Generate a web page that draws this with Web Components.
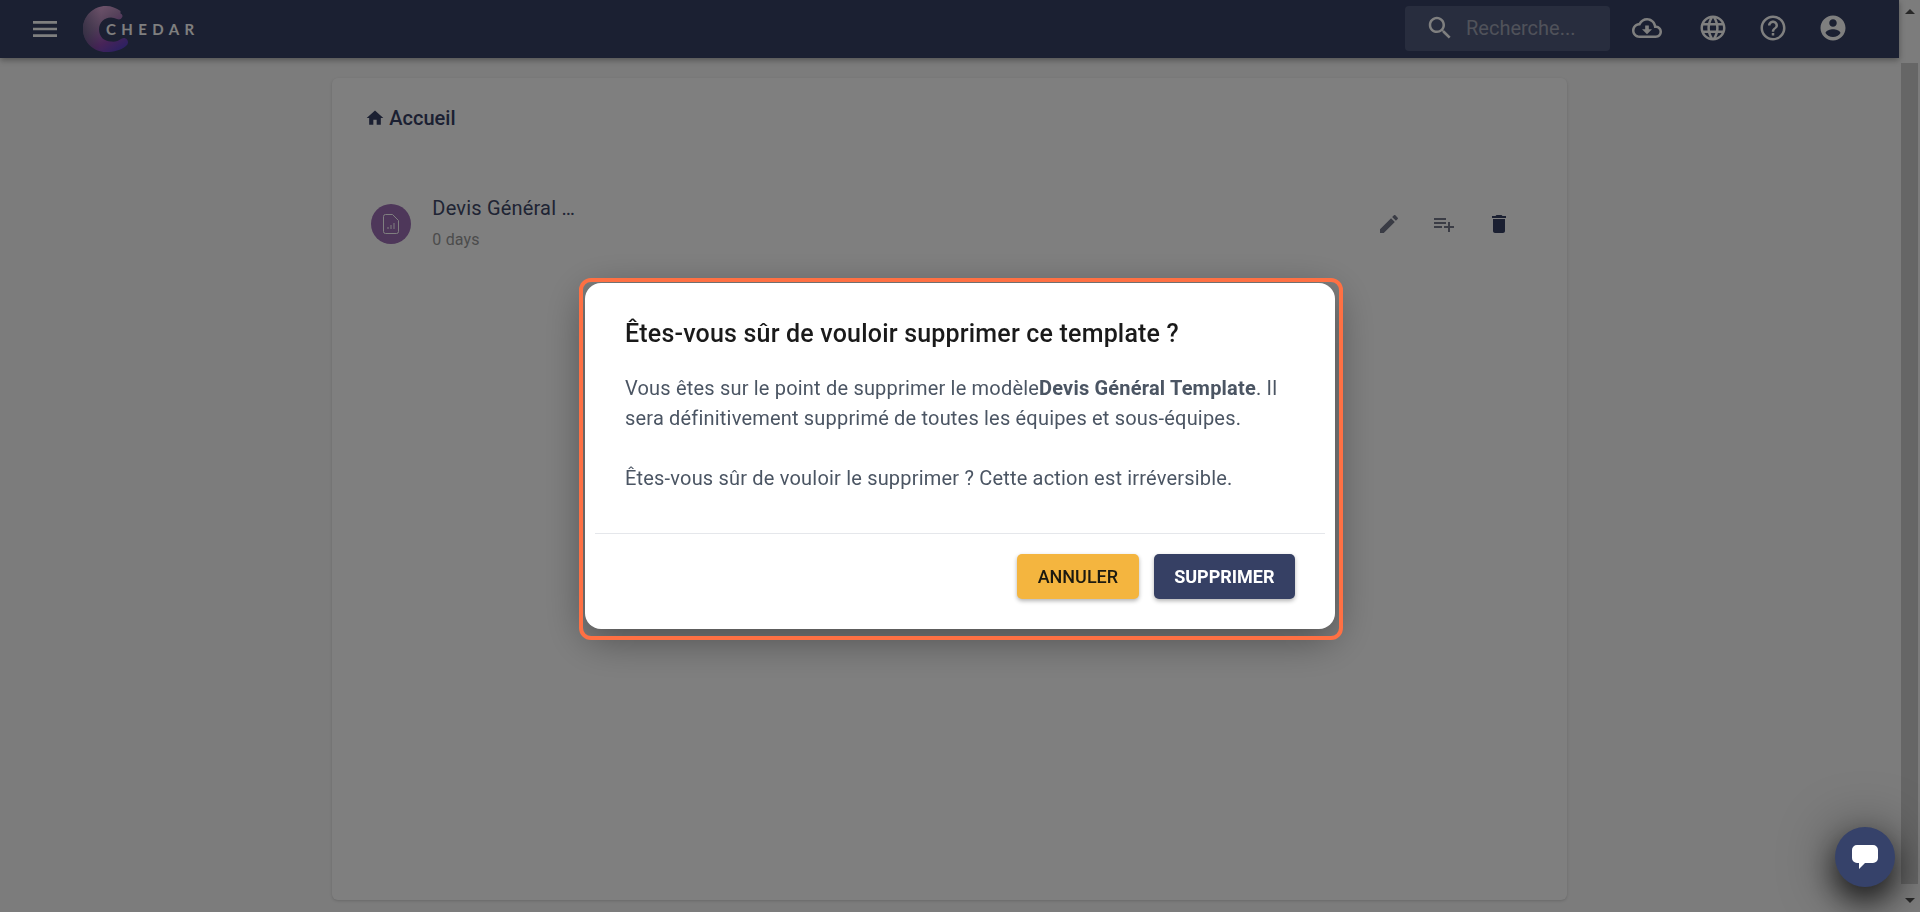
<!DOCTYPE html>
<html lang="fr">
<head>
<meta charset="utf-8">
<title>Chedar</title>
<style>
  html, body { margin: 0; height: 100%; overflow: hidden; }
  body { font-family: Roboto, "Liberation Sans", sans-serif; background: #f8f8f8; }
  #app { display: flex; height: 912px; }
  #main { flex: 1; min-width: 0; display: flex; flex-direction: column; }
</style>
</head>
<body>
<div id="app">
  <div id="main">
    <top-bar></top-bar>
    <home-card>
      <template-row titre="Devis Général …" sub="0 days"></template-row>
    </home-card>
  </div>
  <scroll-bar></scroll-bar>
</div>

<confirm-dialog titre="Êtes-vous sûr de vouloir supprimer ce template ?" cancel="Annuler" ok="Supprimer">
  Vous êtes sur le point de supprimer le modèle<b>Devis Général Template</b>. Il sera définitivement supprimé de toutes les équipes et sous-équipes.<br><br>Êtes-vous sûr de vouloir le supprimer ? Cette action est irréversible.
</confirm-dialog>

<chat-button></chat-button>

<script>
const ICONS = {
  menu: 'M3 18h18v-2H3v2zm0-5h18v-2H3v2zm0-7v2h18V6H3z',
  search: 'M15.5 14h-.79l-.28-.27C15.41 12.59 16 11.11 16 9.5 16 5.91 13.09 3 9.5 3S3 5.91 3 9.5 5.91 16 9.5 16c1.61 0 3.09-.59 4.23-1.57l.27.28v.79l5 4.99L20.49 19l-4.99-5zm-6 0C7.01 14 5 11.99 5 9.5S7.01 5 9.5 5 14 7.01 14 9.5 11.99 14 9.5 14z',
  cloud: 'M19.35 10.04C18.67 6.59 15.64 4 12 4 9.11 4 6.6 5.64 5.35 8.04 2.34 8.36 0 10.91 0 14c0 3.31 2.69 6 6 6h13c2.76 0 5-2.24 5-5 0-2.64-2.05-4.78-4.65-4.96zM19 18H6c-2.21 0-4-1.79-4-4 0-2.05 1.53-3.76 3.56-3.97l1.07-.11.5-.95C8.08 7.14 9.94 6 12 6c2.62 0 4.88 1.86 5.39 4.43l.3 1.5 1.53.11c1.56.1 2.78 1.41 2.78 2.96 0 1.65-1.35 3-3 3zm-5.55-8h-2.9v3H8l4 4 4-4h-2.55z',
  language: 'M11.99 2C6.47 2 2 6.48 2 12s4.47 10 9.99 10C17.52 22 22 17.52 22 12S17.52 2 11.99 2zm6.93 6h-2.95c-.32-1.25-.78-2.45-1.38-3.56 1.84.63 3.37 1.91 4.33 3.56zM12 4.04c.83 1.2 1.48 2.53 1.91 3.96h-3.82c.43-1.43 1.08-2.76 1.91-3.96zM4.26 14C4.1 13.36 4 12.69 4 12s.1-1.36.26-2h3.38c-.08.66-.14 1.32-.14 2 0 .68.06 1.34.14 2H4.26zm.82 2h2.95c.32 1.25.78 2.45 1.38 3.56-1.84-.63-3.37-1.9-4.33-3.56zm2.95-8H5.08c.96-1.66 2.49-2.93 4.33-3.56C8.81 5.55 8.35 6.75 8.03 8zM12 19.96c-.83-1.2-1.48-2.53-1.91-3.96h3.82c-.43 1.43-1.08 2.76-1.91 3.96zM14.34 14H9.66c-.09-.66-.16-1.32-.16-2 0-.68.07-1.35.16-2h4.68c.09.65.16 1.32.16 2 0 .68-.07 1.34-.16 2zm.25 5.56c.6-1.11 1.06-2.31 1.38-3.56h2.95c-.96 1.65-2.49 2.93-4.33 3.56zM16.36 14c.08-.66.14-1.32.14-2 0-.68-.06-1.34-.14-2h3.38c.16.64.26 1.31.26 2s-.1 1.36-.26 2h-3.38z',
  help: 'M11 18h2v-2h-2v2zm1-16C6.48 2 2 6.48 2 12s4.48 10 10 10 10-4.48 10-10S17.52 2 12 2zm0 18c-4.41 0-8-3.59-8-8s3.59-8 8-8 8 3.59 8 8-3.59 8-8 8zm0-14c-2.21 0-4 1.79-4 4h2c0-1.1.9-2 2-2s2 .9 2 2c0 2-3 1.75-3 5h2c0-2.25 3-2.5 3-5 0-2.21-1.79-4-4-4z',
  account: 'M12 2C6.48 2 2 6.48 2 12s4.48 10 10 10 10-4.48 10-10S17.52 2 12 2zm0 3c1.66 0 3 1.34 3 3s-1.34 3-3 3-3-1.34-3-3 1.34-3 3-3zm0 14.2c-2.5 0-4.71-1.28-6-3.22.03-1.99 4-3.08 6-3.08 1.99 0 5.97 1.09 6 3.08-1.29 1.94-3.5 3.22-6 3.22z',
  home: 'M10 20v-6h4v6h5v-8h3L12 3 2 12h3v8z',
  edit: 'M3 17.25V21h3.75L17.81 9.94l-3.75-3.75L3 17.25zM20.71 7.04c.39-.39.39-1.02 0-1.41l-2.34-2.34c-.39-.39-1.02-.39-1.41 0l-1.83 1.83 3.75 3.75 1.83-1.83z',
  playlist: 'M14 10H2v2h12v-2zm0-4H2v2h12V6zm4 8v-4h-2v4h-4v2h4v4h2v-4h4v-2h-4zM2 16h8v-2H2v2z',
  trash: 'M6 19c0 1.1.9 2 2 2h8c1.1 0 2-.9 2-2V7H6v12zM19 4h-3.5l-1-1h-5l-1 1H5v2h14V4z'
};

class MatIcon extends HTMLElement {
  constructor() {
    super()
    const size = this.getAttribute('size') || 24;
    const color = this.getAttribute('color') || 'currentColor';
    this.attachShadow({ mode: 'open' }).innerHTML = `
      <style>
        :host { display: inline-flex; flex: none; width: ${size}px; height: ${size}px; }
        svg { width: 100%; height: 100%; fill: ${color}; display: block; }
      </style>
      <svg viewBox="0 0 24 24"><path d="${ICONS[this.getAttribute('name')]}"/></svg>
    `;
  }
}

class TopBar extends HTMLElement {
  constructor() {
    super()
    this.attachShadow({ mode: 'open' }).innerHTML = `
      <style>
        :host { display: flex; align-items: center; height: 58px; flex: none; background: #364064; color: #fff;
                box-shadow: 0 2px 6px rgba(0,0,0,.35); position: relative; z-index: 1; padding-left: 29px; }
        .logo { display: flex; align-items: center; margin-left: 22px; height: 46px; width: 112px; }
        .logo svg { width: 46px; height: 46px; display: block; flex: none; }
        .logo span { font: 700 15px Lato, Roboto, sans-serif; letter-spacing: 5.4px; margin-left: -23px; color: #fff; }
        .search { margin-left: auto; display: flex; align-items: center; width: 205px; height: 45px; box-sizing: border-box;
                  border-radius: 4px; background: #505a7c; padding-left: 20px; position: relative; top: -1px; }
        .search span { font-size: 20px; color: #a0a4b4; margin-left: 11px; }
        .tools { display: flex; align-items: center; margin-left: 22px; margin-right: 51px; position: relative; top: -1px; }
        .tools mat-icon:nth-child(2) { margin-left: 36px; }
        .tools mat-icon:nth-child(3) { margin-left: 30px; }
        .tools mat-icon:nth-child(4) { margin-left: 30px; }
      </style>
      <mat-icon name="menu" size="32"></mat-icon>
      <div class="logo">
        <svg viewBox="0 0 46 46">
          <defs>
            <linearGradient id="a" x1="0.95" y1="0.95" x2="0.35" y2="0">
              <stop offset="0" stop-color="#5040c8"/>
              <stop offset=".35" stop-color="#9048b0"/>
              <stop offset=".7" stop-color="#b088b8"/>
              <stop offset="1" stop-color="#e0a8d8"/>
            </linearGradient>
            <linearGradient id="b" x1="0" y1="0" x2="1" y2="0">
              <stop offset="0" stop-color="#364064" stop-opacity=".55"/>
              <stop offset=".4" stop-color="#364064" stop-opacity="0"/>
            </linearGradient>
          </defs>
          <path fill="url(#a)" d="M37.500 5C33.500 2 28.500 0 23 0 10.300 0 0 10.300 0 23s10.300 23 23 23c8 0 15-2 20-6 2.500-2 2.500-4.500 1-6.500-1.500-2-4-2-6-.500-2.500 2-6 3-10 2.500-7 0-12-5-12-12s5-12 12-12c2 0 4 .5 6 1.500 2 1 4 .5 5-1.500 1-1.500.5-3-1.500-4z"/>
          <path fill="url(#b)" d="M37.500 5C33.500 2 28.500 0 23 0 10.300 0 0 10.300 0 23s10.300 23 23 23c8 0 15-2 20-6 2.500-2 2.500-4.500 1-6.500-1.500-2-4-2-6-.500-2.500 2-6 3-10 2.500-7 0-12-5-12-12s5-12 12-12c2 0 4 .5 6 1.500 2 1 4 .5 5-1.500 1-1.500.5-3-1.500-4z"/>
        </svg>
        <span>CHEDAR</span>
      </div>
      <div class="search">
        <mat-icon name="search" size="30"></mat-icon>
        <span>Recherche...</span>
      </div>
      <div class="tools">
        <mat-icon name="cloud" size="30"></mat-icon>
        <mat-icon name="language" size="30"></mat-icon>
        <mat-icon name="help" size="30"></mat-icon>
        <mat-icon name="account" size="30"></mat-icon>
      </div>
    `;
  }
}

class HomeCard extends HTMLElement {
  constructor() {
    super()
    this.attachShadow({ mode: 'open' }).innerHTML = `
      <style>
        :host { display: block; box-sizing: border-box; width: 65%; height: 822px; margin: 20px auto 0; background: #fff;
                border-radius: 6px; box-shadow: 0 1px 3px rgba(0,0,0,.16); padding: 28px 39px 0; flex: none; }
        .crumb { display: flex; align-items: center; gap: 4px; margin-left: -6px; font-size: 20px; font-weight: 500;
                 line-height: 24px; color: #364064; }
        .list { margin-top: 66px; }
      </style>
      <div class="crumb"><mat-icon name="home" size="20"></mat-icon>Accueil</div>
      <div class="list"><slot></slot></div>
    `;
  }
}

class TemplateRow extends HTMLElement {
  constructor() {
    super()
    this.attachShadow({ mode: 'open' }).innerHTML = `
      <style>
        :host { display: flex; align-items: center; }
        .avatar { width: 40px; height: 40px; border-radius: 50%; background: #9c6eb4; flex: none;
                  display: flex; align-items: center; justify-content: center; }
        .avatar svg { width: 16px; height: 20px; display: block; }
        .txt { margin-left: 21px; }
        .t { font-size: 20px; letter-spacing: .19px; line-height: 24px; color: #404868; white-space: nowrap; }
        .s { font-size: 16px; letter-spacing: .17px; line-height: 24px; margin-top: 8px; color: #989898; }
        .acts { margin-left: auto; margin-right: 17px; display: flex; gap: 31px; }
      </style>
      <div class="avatar">
        <svg viewBox="0 0 16 20" fill="none" stroke="#fff" stroke-width="1">
          <path d="M2.500.5h7l6 6v11a2 2 0 0 1-2 2h-11a2 2 0 0 1-2-2v-15a2 2 0 0 1 2-2z"/>
          <path d="M5 15v-2M8 15v-4M11 15v-6"/>
        </svg>
      </div>
      <div class="txt">
        <div class="t">${this.getAttribute('titre')}</div>
        <div class="s">${this.getAttribute('sub')}</div>
      </div>
      <div class="acts">
        <mat-icon name="edit" color="#74788a"></mat-icon>
        <mat-icon name="playlist" color="#74788a"></mat-icon>
        <mat-icon name="trash" color="#364064"></mat-icon>
      </div>
    `;
  }
}

class ScrollBar extends HTMLElement {
  constructor() {
    super()
    this.attachShadow({ mode: 'open' }).innerHTML = `
      <style>
        :host { display: flex; flex-direction: column; align-items: center; width: 21px; flex: none; background: #f8f8f8; }
        .up, .down { width: 0; height: 0; border-left: 5px solid transparent; border-right: 5px solid transparent; flex: none; }
        .up { border-bottom: 5px solid #505050; margin-top: 9px; }
        .thumb { width: 17px; height: 821px; margin-top: 49px; background: #cdcdcd; flex: none; }
        .down { border-top: 5px solid #505050; margin-top: 14px; }
      </style>
      <div class="up"></div>
      <div class="thumb"></div>
      <div class="down"></div>
    `;
  }
}

class ConfirmDialog extends HTMLElement {
  constructor() {
    super()
    this.attachShadow({ mode: 'open' }).innerHTML = `
      <style>
        :host { position: fixed; inset: 0; z-index: 10; display: flex; align-items: center; justify-content: center;
                background: rgba(0,0,0,.5); }
        .box { position: relative; width: 750px; height: 346px; box-sizing: border-box; background: #fff; border-radius: 16px;
               box-shadow: 0 10px 40px rgba(0,0,0,.4); display: flex; flex-direction: column; }
        .mark { position: absolute; inset: -5px -8px -11px -6px; border: 4px solid #ff7043; border-radius: 12px; pointer-events: none; }
        h2 { margin: 36px 40px 0; font-size: 25px; letter-spacing: .19px; line-height: 30px; font-weight: 500; color: #1a1a1a; }
        .msg { margin: 24px 40px 0; font-size: 20px; letter-spacing: .19px; line-height: 30px; color: #4b5563; }
        hr { border: 0; border-top: 1px solid #e5e7eb; margin: 40px 10px 0; }
        .btns { display: flex; justify-content: flex-end; gap: 15px; margin: 20px 40px 0; }
      </style>
      <div class="box">
        <h2>${this.getAttribute('titre')}</h2>
        <div class="msg"><slot></slot></div>
        <hr>
        <div class="btns">
          <ui-button kind="warn">${this.getAttribute('cancel')}</ui-button>
          <ui-button kind="main">${this.getAttribute('ok')}</ui-button>
        </div>
        <div class="mark"></div>
      </div>
    `;
  }
}

class UiButton extends HTMLElement {
  constructor() {
    super()
    const main = this.getAttribute('kind') === 'main';
    this.attachShadow({ mode: 'open' }).innerHTML = `
      <style>
        :host { display: inline-flex; align-items: center; height: 45px; padding: 0 20.5px; border-radius: 5px;
                font-size: 18px; font-weight: ${main ? 700 : 500}; text-transform: uppercase;
                background: ${main ? '#364064' : '#f4b53f'}; color: ${main ? '#fff' : '#1c1a10'};
                box-shadow: 0 2px 4px rgba(0,0,0,.3); }
      </style>
      <slot></slot>
    `;
  }
}

class ChatButton extends HTMLElement {
  constructor() {
    super()
    this.attachShadow({ mode: 'open' }).innerHTML = `
      <style>
        :host { position: fixed; right: 25px; bottom: 25px; z-index: 20; width: 60px; height: 60px; border-radius: 50%;
                background: #36426a; display: flex; align-items: center; justify-content: center;
                box-shadow: 0 14px 30px rgba(0,0,0,.7), 0 4px 55px 4px rgba(0,0,0,.4); }
        svg { width: 26px; height: 24px; display: block; }
      </style>
      <svg viewBox="0 0 26 24"><path fill="#fff" d="M5 0h16a5 5 0 0 1 5 5v8a5 5 0 0 1-5 5h-8l-6 6v-6H5a5 5 0 0 1-5-5V5a5 5 0 0 1 5-5z"/></svg>
    `;
  }
}

customElements.define('mat-icon', MatIcon);
customElements.define('top-bar', TopBar);
customElements.define('home-card', HomeCard);
customElements.define('template-row', TemplateRow);
customElements.define('scroll-bar', ScrollBar);
customElements.define('ui-button', UiButton);
customElements.define('confirm-dialog', ConfirmDialog);
customElements.define('chat-button', ChatButton);
</script>
</body>
</html>
